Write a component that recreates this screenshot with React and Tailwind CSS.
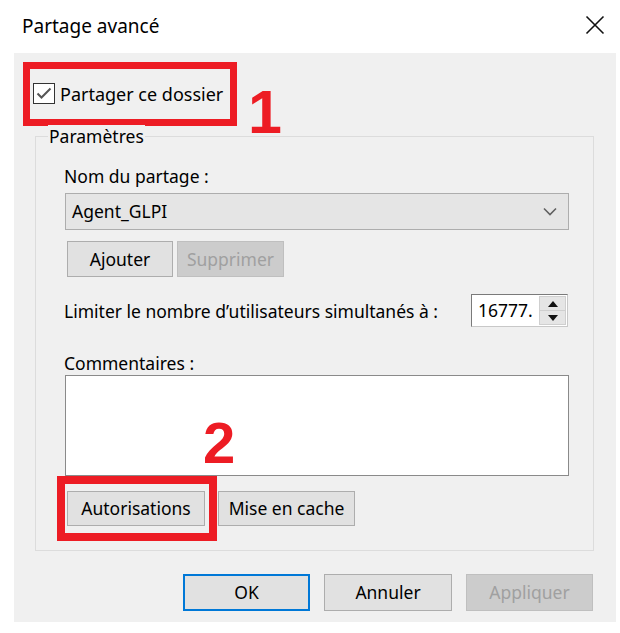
import React from "react";

const FONT = { fontFamily: '"Noto Sans", "Liberation Sans", sans-serif' };

function Btn({ children, className = "", disabled = false, primary = false }) {
  return (
    <button
      className={`flex items-center justify-center text-[17.5px] ${
        disabled
          ? "bg-[#cccccc] border border-[#bfbfbf] text-[#a0a0a0]"
          : primary
          ? "bg-[#e1e1e1] border-2 border-[#0078d7] text-black"
          : "bg-[#e1e1e1] border border-[#adadad] text-black"
      } ${className}`}
    >
      {children}
    </button>
  );
}

function Chevron() {
  return (
    <svg width="14" height="9" viewBox="0 0 14 9" fill="none">
      <path d="M1 1.5 L7 7.5 L13 1.5" stroke="#606060" strokeWidth="1.6" />
    </svg>
  );
}

export default function App() {
  return (
    <div className="w-[620px] h-[633px] bg-white relative overflow-hidden text-black" style={FONT}>
      {/* Title bar */}
      <div className="h-[53px] flex items-center justify-between pl-[22px] pr-[15px]">
        <span className="text-[19px] leading-none">Partage avancé</span>
        <svg width="20" height="20" viewBox="0 0 20 20" className="-mt-[3px]">
          <path d="M1.5 1.5 L18.5 18.5 M18.5 1.5 L1.5 18.5" stroke="#111" strokeWidth="1.6" />
        </svg>
      </div>

      {/* Body */}
      <div className="ml-[14px] mr-[4px] h-[569px] bg-[#f0f0f0] relative flex flex-col">
        {/* Annotation 1 */}
        <div className="ml-[9px] mt-[9px] w-[214px] h-[64px] border-[7px] border-[#ed1c24] flex items-center pl-[3px] pb-[1px]">
          <div className="w-[22px] h-[21px] border-[1.5px] border-[#333] bg-white flex items-center justify-center">
            <svg width="16" height="13" viewBox="0 0 16 13" fill="none">
              <path d="M1.5 6.5 L5.5 10.5 L14.5 1.5" stroke="#555" strokeWidth="2" />
            </svg>
          </div>
          <span className="ml-[5px] text-[18px] leading-none">Partager ce dossier</span>
        </div>
        <span className="absolute left-[234px] top-[29px] text-[61px] font-bold leading-none text-[#ed1c24]" style={{ fontFamily: '"Liberation Sans", sans-serif' }}>
          1
        </span>

        {/* Group box */}
        <div className="ml-[21px] mt-[10px] w-[559px] h-[415px] border border-[#dcdcdc] relative flex flex-col">
          <span className="absolute left-[12px] -top-[12px] px-[1px] bg-[#f0f0f0] text-[17.5px] leading-[22px]">Paramètres</span>

          <span className="ml-[28px] mt-[28px] text-[17.5px] leading-[22px]">Nom du partage :</span>
          <div className="ml-[29px] mt-[6px] w-[504px] h-[37px] bg-[#e5e5e5] border border-[#adadad] flex items-center justify-between pl-[6px] pr-[11px]">
            <span className="text-[17.5px]">Agent_GLPI</span>
            <Chevron />
          </div>

          <div className="ml-[31px] mt-[11px] flex gap-[4px]">
            <Btn className="w-[106px] h-[36px]">Ajouter</Btn>
            <Btn className="w-[107px] h-[36px]" disabled>Supprimer</Btn>
          </div>

          <div className="mt-[17px] flex items-center">
            <span className="ml-[28px] text-[17.5px] leading-[22px]">Limiter le nombre d’utilisateurs simultanés à :</span>
            <div className="ml-auto mr-[25px] w-[97px] h-[33px] border border-[#7a7a7a] border-r-[#c8c8c8] border-b-[#c8c8c8] bg-white flex">
              <span className="flex-1 text-[17.5px] leading-[31px] pl-[6px] overflow-hidden whitespace-nowrap">16777.</span>
              <div className="w-[27px] my-[1px] mr-[1px] flex flex-col bg-[#e5e5e5] border border-[#cfcfcf]">
                <div className="flex-1 flex items-center justify-center border-b border-[#cfcfcf]">
                  <svg width="10" height="6" viewBox="0 0 10 6"><path d="M5 0 L10 6 L0 6 Z" fill="#111" /></svg>
                </div>
                <div className="flex-1 flex items-center justify-center">
                  <svg width="10" height="6" viewBox="0 0 10 6"><path d="M0 0 L10 0 L5 6 Z" fill="#111" /></svg>
                </div>
              </div>
            </div>
          </div>

          <span className="ml-[28px] mt-[25px] text-[17.5px] leading-[22px]">Commentaires :</span>
          <div className="ml-[29px] mt-[1px] w-[504px] h-[101px] bg-white border border-[#8a8a8a]" />

          <div className="ml-[31px] mt-[15px] flex gap-[13px]">
            <div className="relative">
              <Btn className="w-[138px] h-[35px]">Autorisations</Btn>
              <div className="absolute -left-[10px] -top-[15px] -right-[12px] -bottom-[15px] border-[8px] border-[#ed1c24] pointer-events-none" />
            </div>
            <Btn className="w-[137px] h-[35px]">Mise en cache</Btn>
          </div>

          {/* Annotation 2 */}
          <span className="absolute left-[167px] top-[277px] text-[58px] font-bold leading-none text-[#ed1c24]" style={{ fontFamily: '"Liberation Sans", sans-serif' }}>
            2
          </span>
        </div>

        {/* Footer buttons */}
        <div className="mt-[23px] ml-[169px] flex gap-[14px]">
          <Btn className="w-[127px] h-[37px]" primary>OK</Btn>
          <Btn className="w-[128px] h-[37px]">Annuler</Btn>
          <Btn className="w-[127px] h-[37px]" disabled>Appliquer</Btn>
        </div>
      </div>
    </div>
  );
}
